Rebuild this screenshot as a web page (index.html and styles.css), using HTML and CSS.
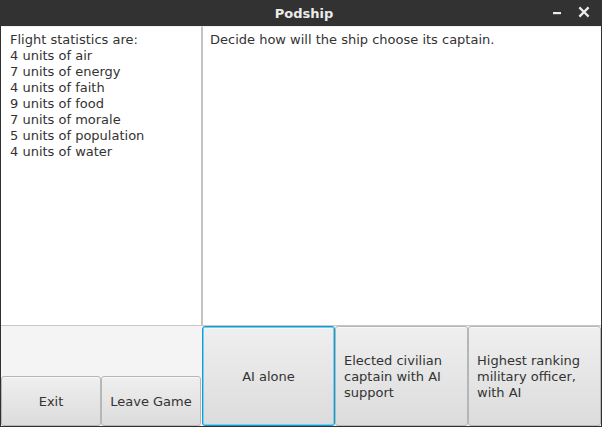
FILE: index.html
```html
<!DOCTYPE html>
<html>
<head>
<meta charset="utf-8">
<link rel="stylesheet" href="styles.css">
</head>
<body>
<div class="window">
  <div class="titlebar">
    <span class="title">Podship</span>
    <div class="controls">
      <svg class="ctl" width="14" height="14" viewBox="0 0 14 14"><rect x="2" y="7" width="8" height="2.2" fill="#ececec"/></svg>
      <svg class="ctl" width="14" height="14" viewBox="0 0 14 14"><path d="M3.2 3.2 L10.8 10.8 M10.8 3.2 L3.2 10.8" stroke="#ececec" stroke-width="2.3" stroke-linecap="square"/></svg>
    </div>
  </div>
  <div class="main">
    <div class="textarea stats">Flight statistics are:<br>4 units of air<br>7 units of energy<br>4 units of faith<br>9 units of food<br>7 units of morale<br>5 units of population<br>4 units of water</div>
    <div class="textarea prompt">Decide how will the ship choose its captain.</div>
    <div class="left-buttons">
      <button class="btn small">Exit</button>
      <button class="btn small">Leave Game</button>
    </div>
    <div class="choices">
      <button class="btn big focused">AI alone</button>
      <button class="btn big wrap"><span>Elected civilian captain with AI support</span></button>
      <button class="btn big wrap"><span>Highest ranking military officer, with AI</span></button>
    </div>
  </div>
</div>
</body>
</html>
```
FILE: styles.css
```css
html, body {
  margin: 0;
  padding: 0;
}
body {
  width: 602px;
  height: 427px;
  overflow: hidden;
  font-family: "DejaVu Sans", sans-serif;
  font-size: 13px;
}
.window {
  width: 602px;
  height: 427px;
  box-sizing: border-box;
  background: #303030;
  padding: 0 1px 1px 1px;
  display: flex;
  flex-direction: column;
}
.titlebar {
  height: 26px;
  margin: 0 -1px;
  background: #323232;
  position: relative;
  display: flex;
  align-items: center;
  justify-content: center;
}
.title {
  color: #ececec;
  font-weight: bold;
  font-size: 13px;
  margin-left: 6px;
}
.controls {
  position: absolute;
  right: 11px;
  top: 5px;
  display: flex;
  gap: 12px;
}
.ctl {
  display: block;
}
.main {
  display: grid;
  grid-template-columns: 201px 399px;
  grid-template-rows: 300px 100px;
  background: #f4f4f4;
}
.textarea {
  background: #ffffff;
  color: #333333;
  line-height: 16px;
  box-sizing: border-box;
  border-bottom: 1px solid #c8c8c8;
  border-top: 1px solid #f0f0f0;
  padding-top: 5px;
}
.stats {
  padding-left: 9px;
  border-right: 1px solid #c4c4c4;
}
.prompt {
  padding-left: 7px;
  border-left: 1px solid #c4c4c4;
}
.left-buttons {
  display: flex;
  align-items: flex-end;
}
.choices {
  display: flex;
}
.btn {
  font-family: "DejaVu Sans", sans-serif;
  font-size: 13px;
  color: #333333;
  line-height: 16px;
  background: linear-gradient(#efefef, #dcdcdc);
  border: 1px solid #b6b6b6;
  border-radius: 3px;
  box-shadow: inset 0 1px 0 #f8f8f8;
  margin: 0;
  padding: 2px 8px 0 8px;
  box-sizing: border-box;
  cursor: default;
}
.small {
  width: 100px;
  height: 50px;
}
.big {
  width: 133px;
  height: 100px;
}
.wrap {
  text-align: left;
}
.focused {
  border: 1px solid #0a9fd6;
  box-shadow: inset 0 0 0 1px #7fcbe8, inset 0 2px 0 #f6f6f6;
}
```
